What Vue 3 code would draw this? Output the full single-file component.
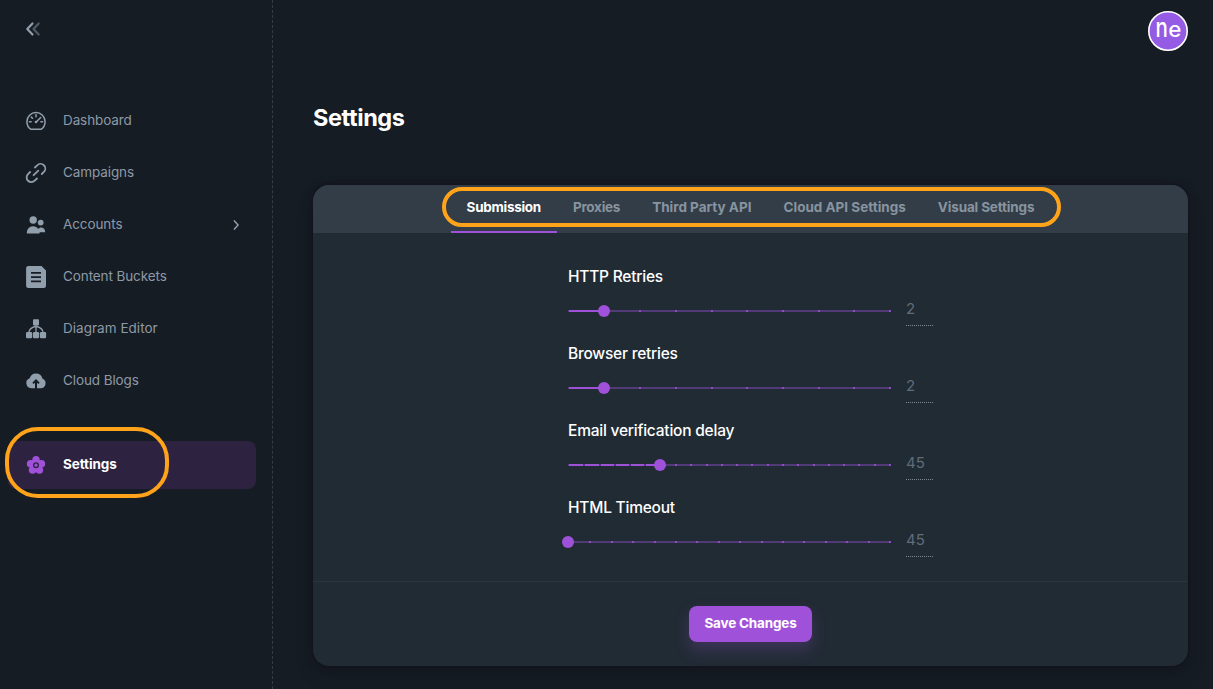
<template>
  <div class="layout">
    <aside class="sidebar">
      <button type="button" class="collapse" aria-label="Collapse">
        <svg width="24" height="24" viewBox="0 0 24 24">
          <path class="front" d="M11.500 6.500 6.300 12l5.200 5.500" />
          <path class="back" d="M17.700 6.500 12.500 12l5.200 5.500" />
        </svg>
      </button>

      <nav class="nav">
        <a v-for="item in navItems" :key="item.id" class="nav-item" :class="item.id">
          <svg v-if="item.id === 'dashboard'" class="icon line" viewBox="0 0 24 24">
            <path d="M7 20.3h10c2.500-1.600 4.100-4.500 4.100-7.600a9.100 9.100 0 1 0-18.200 0c0 3.100 1.600 6 4.100 7.600Z" />
            <path d="m12 13.200 4.700-4.700M12 5.800v1.900M5.400 12.700h1.700M16.900 12.700h1.700M7.300 8.100l1.200 1.200" />
            <circle class="dot" cx="12" cy="13" r="1.300" />
          </svg>
          <svg v-else-if="item.id === 'campaigns'" class="icon line thick" viewBox="0 0 24 24">
            <path d="m9.600 14.200 4.700-4.600" />
            <path d="m10.900 6.500 2.300-2.200a4.700 4.700 0 0 1 6.700 6.600l-2.100 2.100" />
            <path d="m13 17.500-2.300 2.200a4.700 4.700 0 0 1-6.700-6.600l2.100-2.100" />
          </svg>
          <svg v-else-if="item.id === 'accounts'" class="icon" viewBox="0 0 24 24">
            <circle cx="9.200" cy="7" r="3.700" />
            <circle cx="16.700" cy="9.600" r="2.900" />
            <path d="M2.800 20.500c0-4.300 2.500-7.200 6.200-7.200 2.300 0 4.100 1 5.200 2.700.8-1 1.700-1.500 2.800-1.500 2.700 0 4.200 2 4.200 4.700h-5.400l-.5 1.300H2.800Z" />
          </svg>
          <svg v-else-if="item.id === 'buckets'" class="icon" viewBox="0 0 24 24">
            <path fill-rule="evenodd" d="M4.300 1h13.200L22 5.500v15.300a2.200 2.200 0 0 1-2.200 2.200H4.300a2.200 2.200 0 0 1-2.200-2.200V3.200A2.200 2.200 0 0 1 4.300 1ZM7 7.100v1.600h10V7.100H7Zm0 4.200v1.600h10v-1.600H7Zm0 4.300v1.600h10v-1.600H7Z" />
          </svg>
          <svg v-else-if="item.id === 'diagram'" class="icon" viewBox="0 0 24 24">
            <rect x="9" y="2.200" width="6" height="6.200" rx="1" />
            <rect x="2" y="15" width="6.200" height="6.200" rx="1.200" />
            <rect x="9" y="15" width="6.100" height="6.200" rx="1.200" />
            <rect x="15.900" y="15" width="6.200" height="6.200" rx="1.200" />
            <path class="wire" d="M12 7v9M11.300 9.500c-3.600 1-5.900 2.800-6.300 5.500M12.700 9.500c3.600 1 5.900 2.800 6.300 5.500" />
          </svg>
          <svg v-else-if="item.id === 'cloud'" class="icon" viewBox="0 0 24 24">
            <path d="M18.400 9.400A6.600 6.600 0 0 0 5.700 9.300a5.100 5.100 0 0 0 1.500 9.900H11v-5.400l-1.300 1.300-1.400-1.400L12 10l3.700 3.700-1.400 1.400-1.300-1.300v5.400h3.900a5.100 5.100 0 0 0 1.500-9.800Z" />
          </svg>
          <svg v-else class="icon" viewBox="0 0 24 24">
            <circle cx="12" cy="6.600" r="3.600" />
            <circle cx="17.400" cy="10.700" r="3.800" />
            <circle cx="15.400" cy="17" r="3.800" />
            <circle cx="8.600" cy="17" r="3.800" />
            <circle cx="6.600" cy="10.700" r="3.800" />
            <circle cx="12" cy="12.200" r="6.400" />
            <circle class="hole" cx="12" cy="12.200" r="3" />
            <circle cx="12" cy="12.200" r="1.600" />
          </svg>
          <span>{{ item.label }}</span>
          <svg v-if="item.id === 'accounts'" class="chevron" viewBox="0 0 16 16">
            <path d="m6.400 3.900 3.700 4.100-3.700 4.100" />
          </svg>
        </a>
      </nav>
      <div class="nav-highlight" />
    </aside>

    <main class="main">
      <header class="topbar">
        <svg class="avatar" width="40" height="40" viewBox="0 0 40 40">
          <circle cx="20" cy="20" r="19.200" />
          <text transform="translate(7.500 25.800) scale(1.140 1.480)">n</text>
          <text transform="translate(20.300 25.900) scale(1.240 1.150)">e</text>
        </svg>
      </header>

      <h1>Settings</h1>

      <section class="card">
        <div class="tabs">
          <button
            v-for="tab in tabs"
            :key="tab.id"
            type="button"
            class="tab"
            :class="[tab.id, { active: tab.id === current }]"
            @click="current = tab.id">
            {{ tab.label }}
          </button>
          <div class="tabs-highlight" />
        </div>

        <div class="form">
          <div v-for="field in fields" :key="field.label" class="field">
            <label>{{ field.label }}</label>
            <div class="field-row">
              <div class="slider">
                <div class="rail" />
                <div class="track" :style="{ width: percent(field, field.step) }" />
                <i
                  v-for="n in field.steps + 1"
                  :key="n"
                  class="mark"
                  :class="{ passed: n - 1 <= field.step }"
                  :style="{ left: percent(field, n - 1) }" />
                <div class="thumb" :style="{ left: percent(field, field.step) }" />
              </div>
              <span class="value">{{ field.value }}</span>
            </div>
          </div>
        </div>

        <footer class="card-footer">
          <button type="button" class="save">Save Changes</button>
        </footer>
      </section>
    </main>
  </div>
</template>

<script setup>
import { ref } from 'vue'

const navItems = [
  { id: 'dashboard', label: 'Dashboard' },
  { id: 'campaigns', label: 'Campaigns' },
  { id: 'accounts', label: 'Accounts' },
  { id: 'buckets', label: 'Content Buckets' },
  { id: 'diagram', label: 'Diagram Editor' },
  { id: 'cloud', label: 'Cloud Blogs' },
  { id: 'settings', label: 'Settings' },
]

const tabs = [
  { id: 'submission', label: 'Submission' },
  { id: 'proxies', label: 'Proxies' },
  { id: 'third-party', label: 'Third Party API' },
  { id: 'cloud-api', label: 'Cloud API Settings' },
  { id: 'visual', label: 'Visual Settings' },
]
const current = ref('submission')

const fields = [
  { label: 'HTTP Retries', steps: 9, step: 1, value: 2 },
  { label: 'Browser retries', steps: 9, step: 1, value: 2 },
  { label: 'Email verification delay', steps: 21, step: 6, value: 45 },
  { label: 'HTML Timeout', steps: 15, step: 0, value: 45 },
]

const percent = (field, step) => `${(step / field.steps) * 100}%`
</script>

<style>
body { background: #161c24; }
</style>

<style scoped>
.layout { display: flex; width: 100%; height: 689px; overflow: hidden; color: #fff; background: #161c24; font-family: Inter, "Liberation Sans", sans-serif; }
button { padding: 0; border: 0; color: inherit; background: none; font: inherit; cursor: pointer; }

.sidebar { position: relative; box-sizing: border-box; flex: none; width: 273px; padding: 17px 16px 0 8px; border-right: 1px dashed #343d47; }
.collapse { display: block; width: 24px; height: 24px; margin-left: 13px; }
.collapse path { fill: none; stroke: #919eab; stroke-width: 2.200; stroke-linecap: round; stroke-linejoin: round; }
.collapse .back { opacity: .48; }

.nav { display: flex; flex-direction: column; gap: 4px; margin-top: 56px; }
.nav-item { box-sizing: border-box; display: flex; align-items: center; height: 48px; padding: 0 12px 0 16px; border-radius: 8px; color: #8d99a6; font-size: 13.5px; letter-spacing: -.1px; }
.nav-item span { flex: 1; margin: -3px 0 0 15px; }
.nav-item.diagram { letter-spacing: .03px; }
.nav-item.settings { margin-top: 32px; color: #fff; background: #2d2340; font-weight: 700; letter-spacing: -.1px; }
.icon { width: 24px; height: 24px; fill: #919eab; }
.icon.line { fill: none; stroke: #919eab; stroke-width: 1.500; stroke-linecap: round; stroke-linejoin: round; }
.icon.thick { stroke-width: 1.800; }
.icon .dot { fill: #919eab; stroke: none; }
.icon .wire { fill: none; stroke: #919eab; stroke-width: 1.300; }
.settings .icon { fill: #9f52d9; }
.settings .icon .hole { fill: #2d2340; }
.chevron { width: 16px; height: 16px; fill: none; stroke: #919eab; stroke-width: 1.500; stroke-linecap: round; stroke-linejoin: round; }
.nav-highlight { position: absolute; left: 5px; top: 427px; box-sizing: border-box; width: 164px; height: 71px; border: 4px solid #ffa31a; border-radius: 33px; }

.main { flex: 1; padding: 0 25px 0 40px; }
.topbar { display: flex; justify-content: flex-end; height: 92px; padding-top: 11px; box-sizing: border-box; }
.avatar circle { fill: #955be5; stroke: #fff; stroke-width: 1.600; }
.avatar text { fill: #fff; font-size: 18px; font-weight: 500; }

h1 { height: 93px; margin: 0; font-size: 23.5px; font-weight: 700; line-height: 52px; letter-spacing: -.4px; }

.card { height: 481px; overflow: hidden; border-radius: 16px; background: #212b34; box-shadow: 0 0 2px rgba(0,0,0,.2), 0 12px 24px -4px rgba(0,0,0,.12), 0 0 8px rgba(20,14,28,.6); }
.tabs { position: relative; display: flex; justify-content: center; height: 48px; background: #333d47; }
.tab { flex: none; box-sizing: border-box; height: 48px; padding: 0 16px 2px; border-bottom: 2px solid transparent; color: #8794a0; font-size: 13.5px; font-weight: 700; white-space: nowrap; }
.tab.active { border-color: #9f52d9; color: #fff; }
.tab.submission { letter-spacing: -.29px; }
.tab.proxies { letter-spacing: -.25px; }
.tab.visual { letter-spacing: -.15px; }
.tabs-highlight { position: absolute; left: 129px; top: 2px; box-sizing: border-box; width: 619px; height: 40px; border: 4px solid #ffa31a; border-radius: 20px; pointer-events: none; }

.form { width: 365px; margin: 0 auto; padding: 31px 0 9px; }
.field { height: 77px; }
.field label { display: block; height: 26px; font-size: 15.5px; font-weight: 500; line-height: 26px; letter-spacing: -.22px; }
.field-row { display: flex; gap: 17px; height: 36px; }
.slider { position: relative; width: 321px; height: 2px; margin-top: 20px; }
.rail { height: 2px; margin-right: -2px; background: #523a76; }
.track { position: absolute; left: 0; top: 0; height: 2px; background: #9f52d9; }
.mark { position: absolute; top: 0; width: 2px; height: 2px; background: #8f4cc4; }
.mark.passed { background: #523a76; }
.mark:first-of-type { width: 1px; }
.thumb { position: absolute; top: -5px; width: 12px; height: 12px; margin-left: -6px; border-radius: 50%; background: #9f52d9; }
.value { box-sizing: border-box; width: 27px; height: 36px; border-bottom: 1px dotted #7b8791; color: #5f6c78; font-size: 15px; line-height: 38px; }

.card-footer { display: flex; justify-content: center; padding-top: 24px; border-top: 1px solid #2b3540; }
.save { width: 123px; height: 36px; padding-bottom: 2px; border-radius: 8px; background: #9f52d9; box-shadow: 0 8px 16px rgba(159,82,217,.24); font-size: 13.5px; font-weight: 700; letter-spacing: -.18px; }
</style>
